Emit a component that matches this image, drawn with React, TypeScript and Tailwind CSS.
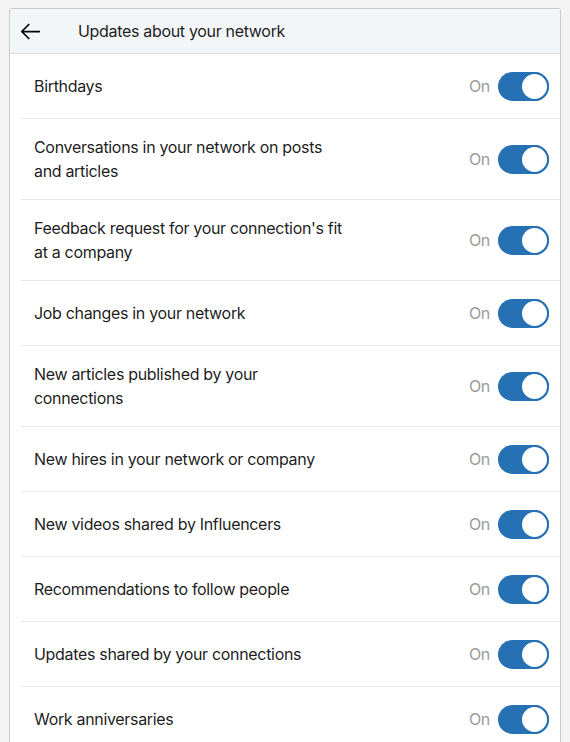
const ITEMS = [
  "Birthdays",
  "Conversations in your network on posts and articles",
  "Feedback request for your connection's fit at a company",
  "Job changes in your network",
  "New articles published by your connections",
  "New hires in your network or company",
  "New videos shared by Influencers",
  "Recommendations to follow people",
  "Updates shared by your connections",
  "Work anniversaries",
];

function Toggle() {
  return (
    <div className="flex items-center gap-2">
      <span className="text-[16px] text-[#9a9a9a]">On</span>
      <div className="w-[51px] h-[29px] rounded-full bg-[#2671b3] flex items-center justify-end">
        <div className="w-[29px] h-[29px] rounded-full bg-white border-[2px] border-[#2671b3]" />
      </div>
    </div>
  );
}

export default function App() {
  return (
    <div
      className="min-h-[742px] bg-[#f3f3f3] pt-2 px-[9px] tracking-[-0.02em]"
      style={{ fontFamily: 'Inter, "Liberation Sans", sans-serif' }}
    >
      <div className="bg-white border border-[#c9c9c9] rounded-t-[3px] overflow-hidden">
        <div className="h-[45px] bg-[#f3f6f8] border-b border-[#d9dde0] flex items-center">
          <svg className="ml-[10px] w-[21px] h-[21px]" viewBox="0 0 24 24" fill="none" stroke="#000" strokeWidth={2} strokeLinecap="round" strokeLinejoin="round">
            <path d="M22 12H2M10 4l-8 8 8 8" />
          </svg>
          <h1 className="ml-[37px] text-[16px] text-black/90">Updates about your network</h1>
        </div>
        <div className="pl-[11px]">
          {ITEMS.map((item, i) => (
            <div
              key={item}
              className={`flex items-center justify-between pr-[11px] py-[16px] ${i > 0 ? "border-t border-[#e4e6e8] min-h-[65px]" : "min-h-[64px]"}`}
            >
              <span className="pl-[13px] w-[325px] text-[16px] leading-[24px] text-black/90">{item}</span>
              <Toggle />
            </div>
          ))}
        </div>
      </div>
    </div>
  );
}
